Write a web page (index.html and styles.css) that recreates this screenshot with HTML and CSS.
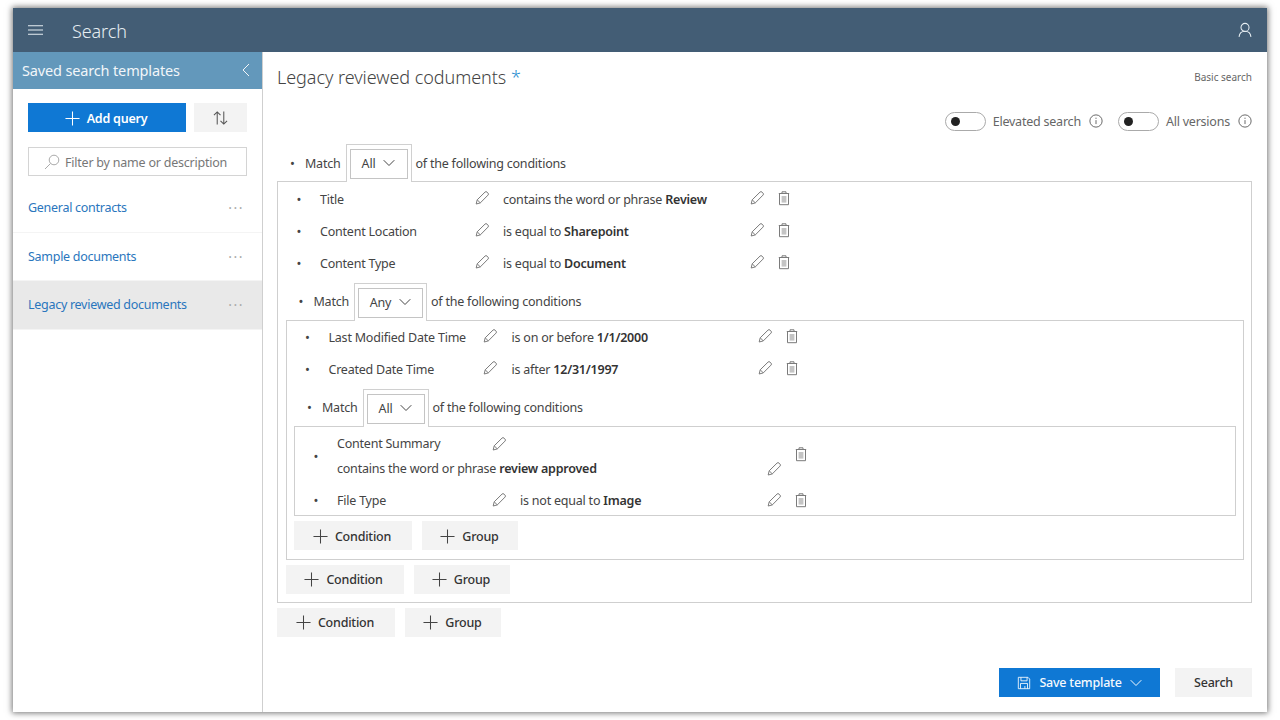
FILE: index.html
```html
<!DOCTYPE html>
<html lang="en">
<head>
<meta charset="utf-8">
<title>Search</title>
<link rel="stylesheet" href="styles.css">
</head>
<body>
<svg class="defs" width="0" height="0" aria-hidden="true">
  <symbol id="pencil" viewBox="0 0 16 16"><path d="M2.200 14l1-4.200L11 2.100a1.400 1.400 0 0 1 2 0l1 1a1.400 1.400 0 0 1 0 2L6.300 12.900z M3.200 9.800l3.100 3.100" fill="none" stroke="currentColor" stroke-width="1"/></symbol>
  <symbol id="trash" viewBox="0 0 16 16"><path d="M3.500 3.500h9v11.200h-9z M6 3.500V1.800h4v1.700 M2.800 3.500h10.400" fill="none" stroke="currentColor" stroke-width="1"/><rect x="5.600" y="6" width="4.800" height="6.600" fill="#c4c4c4"/></symbol>
  <symbol id="plus" viewBox="0 0 16 16"><path d="M8 .5v15M.5 8h15" fill="none" stroke="currentColor" stroke-width="1.100"/></symbol>
  <symbol id="chev" viewBox="0 0 12 8"><path d="M.7 1.200L6 6.500l5.300-5.300" fill="none" stroke="currentColor" stroke-width="1"/></symbol>
  <symbol id="info" viewBox="0 0 16 16"><circle cx="8" cy="8" r="7" fill="none" stroke="currentColor"/><path d="M8 7v4.500M8 4.200v1.400" fill="none" stroke="currentColor"/></symbol>
</svg>
<div class="window">
  <header class="topbar">
    <svg class="burger" viewBox="0 0 16 12" aria-hidden="true"><path d="M0 1.500h16M0 6h16M0 10.500h16" stroke="currentColor" stroke-width="1.200" fill="none"/></svg>
    <span class="app-title">Search</span>
    <svg class="user" viewBox="0 0 16 18" aria-hidden="true"><circle cx="8" cy="6" r="4.600" fill="none" stroke="currentColor" stroke-width="1.200"/><path d="M1.200 16.800c.4-4 3-6.400 6.800-6.400s6.400 2.400 6.800 6.400" fill="none" stroke="currentColor" stroke-width="1.200"/></svg>
  </header>
  <div class="body">
    <aside class="sidebar">
      <div class="side-head">
        <span>Saved search templates</span>
        <svg class="collapse" viewBox="0 0 8 14" aria-hidden="true"><path d="M7 1L1 7l6 6" fill="none" stroke="currentColor" stroke-width="1"/></svg>
      </div>
      <div class="side-actions">
        <button class="btn-add"><svg class="ico-plus" aria-hidden="true"><use href="#plus"/></svg>Add query</button>
        <button class="btn-sort" aria-label="Sort"><svg viewBox="0 0 16 16" aria-hidden="true"><path d="M4.500 15V1.500M1 5l3.500-3.500L8 5M11.500 1v13.500M8 11l3.500 3.500L15 11" fill="none" stroke="currentColor" stroke-width="1.100"/></svg></button>
      </div>
      <div class="filter">
        <svg viewBox="0 0 16 16" aria-hidden="true"><circle cx="10" cy="6" r="4.800" fill="none" stroke="currentColor"/><path d="M6.500 9.500L1 15" fill="none" stroke="currentColor"/></svg>
        <span>Filter by name or description</span>
      </div>
      <ul class="tpl-list">
        <li class="tpl"><a>General contracts</a><span class="dots">···</span></li>
        <li class="tpl"><a>Sample documents</a><span class="dots">···</span></li>
        <li class="tpl tpl-active"><a>Legacy reviewed documents</a><span class="dots">···</span></li>
      </ul>
    </aside>
    <main class="main">
      <div class="title-row">
        <h1>Legacy reviewed coduments <span class="star">*</span></h1>
        <span class="basic">Basic search</span>
      </div>
      <div class="toggles">
        <span class="toggle"><i></i></span><span class="tg-label">Elevated search</span><svg class="ico-info" aria-hidden="true"><use href="#info"/></svg>
        <span class="toggle tg-second"><i></i></span><span class="tg-label">All versions</span><svg class="ico-info" aria-hidden="true"><use href="#info"/></svg>
      </div>

      <section class="group">
        <div class="match"><span class="bullet">•</span><span>Match</span><span class="tab"><span class="select tab-all">All<svg class="ico-chev" aria-hidden="true"><use href="#chev"/></svg></span></span><span>of the following conditions</span></div>
        <div class="box">
          <div class="row"><span class="bullet">•</span><span class="name">Title</span><svg class="ico" aria-hidden="true"><use href="#pencil"/></svg><span>contains the word or phrase <b>Review</b></span><svg class="ico" aria-hidden="true"><use href="#pencil"/></svg><svg class="ico" aria-hidden="true"><use href="#trash"/></svg></div>
          <div class="row"><span class="bullet">•</span><span class="name">Content Location</span><svg class="ico" aria-hidden="true"><use href="#pencil"/></svg><span>is equal to <b>Sharepoint</b></span><svg class="ico" aria-hidden="true"><use href="#pencil"/></svg><svg class="ico" aria-hidden="true"><use href="#trash"/></svg></div>
          <div class="row"><span class="bullet">•</span><span class="name">Content Type</span><svg class="ico" aria-hidden="true"><use href="#pencil"/></svg><span>is equal to <b>Document</b></span><svg class="ico" aria-hidden="true"><use href="#pencil"/></svg><svg class="ico" aria-hidden="true"><use href="#trash"/></svg></div>

          <section class="group nested">
            <div class="match"><span class="bullet">•</span><span>Match</span><span class="tab"><span class="select tab-any">Any<svg class="ico-chev" aria-hidden="true"><use href="#chev"/></svg></span></span><span>of the following conditions</span></div>
            <div class="box">
              <div class="row"><span class="bullet">•</span><span class="name">Last Modified Date Time</span><svg class="ico" aria-hidden="true"><use href="#pencil"/></svg><span>is on or before <b>1/1/2000</b></span><svg class="ico" aria-hidden="true"><use href="#pencil"/></svg><svg class="ico" aria-hidden="true"><use href="#trash"/></svg></div>
              <div class="row"><span class="bullet">•</span><span class="name">Created Date Time</span><svg class="ico" aria-hidden="true"><use href="#pencil"/></svg><span>is after <b>12/31/1997</b></span><svg class="ico" aria-hidden="true"><use href="#pencil"/></svg><svg class="ico" aria-hidden="true"><use href="#trash"/></svg></div>

              <section class="group nested">
                <div class="match"><span class="bullet">•</span><span>Match</span><span class="tab"><span class="select tab-all">All<svg class="ico-chev" aria-hidden="true"><use href="#chev"/></svg></span></span><span>of the following conditions</span></div>
                <div class="box">
                  <div class="row row-wrap"><span class="bullet">•</span><span class="name">Content Summary</span><svg class="ico" aria-hidden="true"><use href="#pencil"/></svg><span class="cond-wrap">contains the word or phrase <b>review approved</b></span><svg class="ico pencil-wrap" aria-hidden="true"><use href="#pencil"/></svg><svg class="ico trash-wrap" aria-hidden="true"><use href="#trash"/></svg></div>
                  <div class="row"><span class="bullet">•</span><span class="name">File Type</span><svg class="ico" aria-hidden="true"><use href="#pencil"/></svg><span>is not equal to <b>Image</b></span><svg class="ico" aria-hidden="true"><use href="#pencil"/></svg><svg class="ico" aria-hidden="true"><use href="#trash"/></svg></div>
                </div>
                <div class="adds"><button class="btn btn-cond"><svg class="ico-plus" aria-hidden="true"><use href="#plus"/></svg>Condition</button><button class="btn btn-group"><svg class="ico-plus" aria-hidden="true"><use href="#plus"/></svg>Group</button></div>
              </section>
            </div>
            <div class="adds"><button class="btn btn-cond"><svg class="ico-plus" aria-hidden="true"><use href="#plus"/></svg>Condition</button><button class="btn btn-group"><svg class="ico-plus" aria-hidden="true"><use href="#plus"/></svg>Group</button></div>
          </section>
        </div>
        <div class="adds"><button class="btn btn-cond"><svg class="ico-plus" aria-hidden="true"><use href="#plus"/></svg>Condition</button><button class="btn btn-group"><svg class="ico-plus" aria-hidden="true"><use href="#plus"/></svg>Group</button></div>
      </section>

      <div class="footer">
        <button class="btn-save"><svg viewBox="0 0 16 16" aria-hidden="true"><path d="M1.500 1.500h11l2 2v11h-13z M4.500 1.500v4h7v-4 M4 14.500v-6h8v6 M9 11.500v3" fill="none" stroke="currentColor"/></svg>Save template<svg class="ico-chev" aria-hidden="true"><use href="#chev"/></svg></button>
        <button class="btn btn-search">Search</button>
      </div>
    </main>
  </div>
</div>
</body>
</html>
```

FILE: styles.css
```css
* { box-sizing: border-box; }
html, body { margin: 0; height: 720px; background: #fff; overflow: hidden; }
body { font-family: "Noto Sans", "Open Sans", sans-serif; font-size: 12.5px; color: #444; letter-spacing: -0.22px; }
.defs { position: absolute; }
b { font-weight: 600; color: #333; }
button { font: inherit; letter-spacing: inherit; border: 0; padding: 0; cursor: pointer; display: flex; align-items: center; justify-content: center; }
ul { list-style: none; margin: 0; padding: 0; }

.window { margin: 8px 13px; height: 704px; background: #fff; display: flex; flex-direction: column; box-shadow: 0 0 6px 1px rgba(0,0,0,.55); }
.topbar { height: 44px; flex: none; background: #435d75; color: #e6edf2; display: flex; align-items: center; padding: 0 15px 0 15px; }
.burger { width: 15px; height: 12px; }
.app-title { font-size: 18px; font-weight: 300; margin-left: 29px; padding-top: 2px; flex: 1; letter-spacing: -0.1px; }
.user { width: 14px; height: 16px; }

.body { flex: 1; display: flex; min-height: 0; }
.sidebar { width: 250px; flex: none; border-right: 1px solid #cfcfcf; }
.side-head { height: 37px; background: #6398bb; color: #f2f6f9; font-size: 14.5px; letter-spacing: -0.15px; display: flex; align-items: center; justify-content: space-between; padding: 0 12px 2px 9px; }
.collapse { width: 8px; height: 14px; }
.side-actions { display: flex; gap: 8px; padding: 14px 15px 0; }
.btn-add { width: 158px; height: 29px; background: #0f78d4; color: #fff; font-weight: 600; gap: 7px; padding: 1px 2px 0 0; }
.btn-add .ico-plus { width: 15px; height: 15px; }
.btn-sort { width: 53px; height: 29px; background: #f3f3f3; color: #555; }
.btn-sort svg { width: 15px; height: 16px; }
.filter { margin: 15px 15px 0; height: 29px; border: 1px solid #d4d4d4; display: flex; align-items: center; gap: 5px; padding: 1px 0 0 15px; color: #777; }
.filter svg { width: 16px; height: 16px; color: #aaa; }
.tpl-list { margin-top: 8px; }
.tpl { height: 48.5px; padding: 0 18px 0 15px; display: flex; align-items: center; justify-content: space-between; border-bottom: 1px solid #f4f4f4; color: #2a76bd; letter-spacing: -0.28px; }
.tpl-active { background: #e9e9e9; }
.dots { color: #aaa; font-size: 14px; letter-spacing: 1.5px; }

.main { flex: 1; padding: 0 15px 0 14px; min-width: 0; }
.title-row { display: flex; justify-content: space-between; align-items: center; padding-top: 11px; height: 38px; }
h1 { margin: 0; font-size: 18px; font-weight: 300; color: #444; letter-spacing: -0.05px; }
.star { color: #2a8fd0; }
.basic { font-size: 10px; color: #666; letter-spacing: 0; }
.toggles { display: flex; align-items: center; justify-content: flex-end; margin-top: 21px; height: 20px; color: #666; }
.toggle { width: 41px; height: 19px; border: 1px solid #aaa; border-radius: 10px; padding: 4px 0 0 5px; margin-right: 7px; }
.toggle i { display: block; width: 9px; height: 9px; border-radius: 50%; background: #222; }
.tg-second { margin-left: 15px; }
.tg-label { margin-right: 8px; letter-spacing: -0.22px; }
.ico-info { width: 14px; height: 14px; color: #555; }

.group > .match { margin-top: 13px; }
.match { height: 38px; display: flex; align-items: center; padding-left: 14px; position: relative; z-index: 1; margin-bottom: -1px; color: #444; }
.match .bullet { width: 15px; margin-left: -1px; font-size: 13px; }
.group.nested > .match { margin-top: 0; padding-bottom: 2px; }
.tab { height: 38px; margin: 0 4px 0 5px; padding: 4px 3px 3px; border: 1px solid #d0d0d0; border-bottom: 0; background: #fff; align-self: flex-start; display: flex; }
.select { height: 30px; padding-bottom: 2px; border: 1px solid #c4c4c4; display: flex; align-items: center; justify-content: center; gap: 8px; }
.tab-all { width: 58px; }
.tab-any { width: 65px; }
.ico-chev { width: 12px; height: 8px; }
.box { border: 1px solid #cfcfcf; padding: 0 7px 0 7.5px; }
.row { height: 32px; padding-top: 2px; display: grid; grid-template-columns: 34.5px 154px 29px 246px 27px 20px; align-items: center; }
.row .bullet { font-size: 13px; padding-left: 11px; }
.ico { width: 16px; height: 16px; color: #7b7b7b; margin-bottom: 2px; }
.nested .row .ico { margin-left: -0.5px; }
.nested > .box > .row { padding-top: 0; }
.nested .nested > .box > .row { padding-top: 2px; }
.nested .nested .ico { margin-bottom: 0; }
.row-wrap { grid-template-rows: 29px 21px 4px; }
.nested .nested > .box > .row-wrap { height: 56px; }
.row-wrap .bullet { grid-row: 1 / 4; grid-column: 1; }
.cond-wrap { grid-row: 2; grid-column: 2 / 5; white-space: nowrap; }
.pencil-wrap { grid-row: 2; grid-column: 5; }
.trash-wrap { grid-row: 1 / 3; grid-column: 6; }
.nested { margin-top: 5px; }
.nested .nested { margin-top: 4px; }
.adds { display: flex; gap: 10px; margin-top: 5px; }
.group.nested > .adds { margin-bottom: 8px; }
.group.nested .group.nested > .adds { margin-bottom: 9px; }
.btn { height: 29px; background: #f3f3f3; color: #333; font-weight: 500; gap: 7px; }
.nested .nested .btn { padding-top: 1px; }
.btn .ico-plus { width: 15px; height: 15px; color: #444; }
.btn-cond { width: 118px; padding-right: 2px; }
.btn-group { width: 96px; padding-right: 1px; }
.footer { display: flex; justify-content: flex-end; gap: 15px; margin-top: 31px; }
.btn-save { width: 161px; height: 29px; background: #0f78d4; color: #f4f9fd; font-weight: 500; gap: 8px; }
.btn-save svg:first-child { width: 14px; height: 14px; }
.btn-search { width: 77px; height: 29px; }
```
